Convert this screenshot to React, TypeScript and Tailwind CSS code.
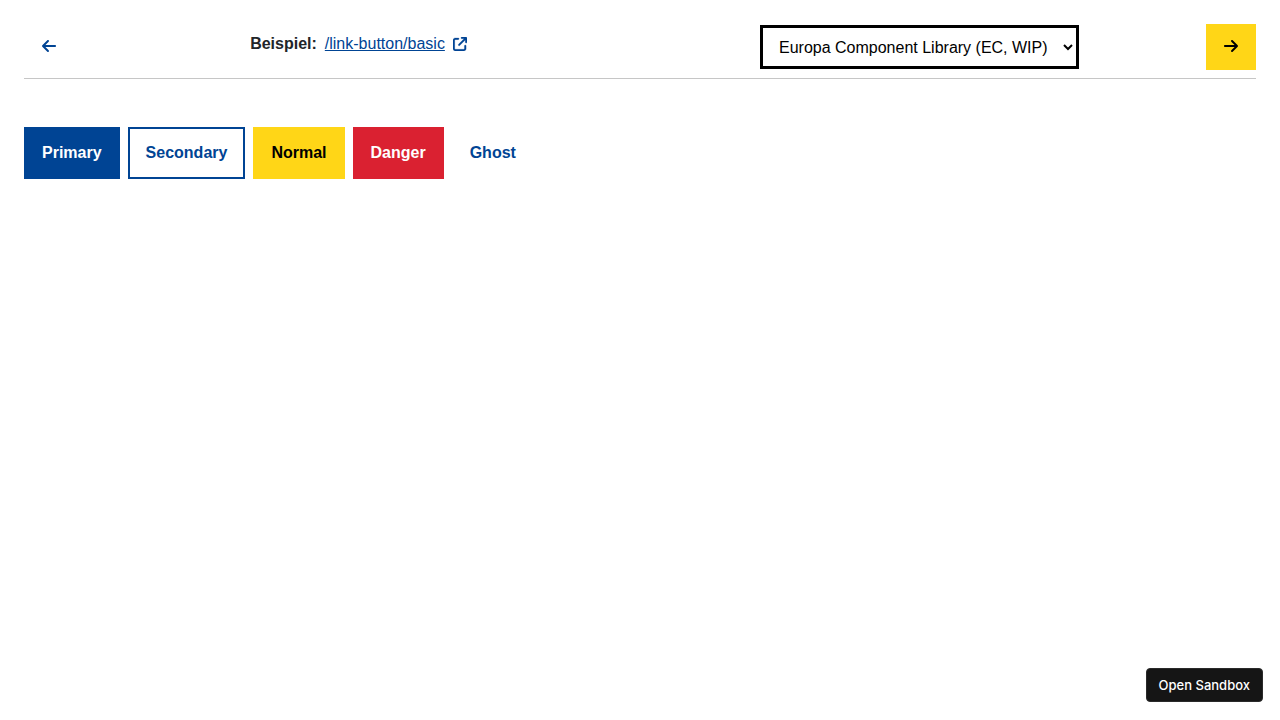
import { useState } from 'react';
import { FaArrowLeft, FaArrowRight, FaArrowUpRightFromSquare } from 'react-icons/fa6';

const buttons = [
  { label: 'Primary', style: 'border-[#004494] bg-[#004494] text-white' },
  { label: 'Secondary', style: 'border-[#004494] bg-white text-[#004494]' },
  { label: 'Normal', style: 'border-[#ffd617] bg-[#ffd617] text-black' },
  { label: 'Danger', style: 'border-[#da2131] bg-[#da2131] text-white' },
  { label: 'Ghost', style: 'border-transparent bg-transparent text-[#004494]' },
];

const themes = ['Europa Component Library (EC, WIP)'];

export default function App() {
  const [theme, setTheme] = useState(themes[0]);

  return (
    <div className="min-h-screen bg-white p-6 font-['Liberation_Sans',Arial,sans-serif] text-base text-[#212529]">
      <header className="flex items-start gap-1 border-b border-[#c6c6c6] pb-2">
        <a
          href="#previous"
          aria-label="Vorheriges Beispiel"
          className="flex h-11 w-[50px] items-center justify-center text-[#004494]"
        >
          <FaArrowLeft size={16} />
        </a>
        <div className="grid flex-1 grid-cols-2 items-start justify-items-center pr-0.5">
          <p className="flex items-center gap-2 pt-2">
            <strong>Beispiel:</strong>
            <a href="#link-button-basic" className="flex items-center gap-2 text-[#004494]">
              <span className="underline">/link-button/basic</span>
              <FaArrowUpRightFromSquare size={14} className="stroke-[#004494] stroke-[8]" />
            </a>
          </p>
          <select
            aria-label="Theme"
            value={theme}
            onChange={(event) => setTheme(event.target.value)}
            className="mt-px h-11 border-3 border-black bg-white px-3 text-black"
          >
            {themes.map((name) => (
              <option key={name}>{name}</option>
            ))}
          </select>
        </div>
        <a
          href="#next"
          aria-label="Nächstes Beispiel"
          className="flex h-[46px] w-[50px] items-center justify-center bg-[#ffd617] pb-0.5 text-black"
        >
          <FaArrowRight size={16} />
        </a>
      </header>

      <main className="flex flex-wrap gap-2 pt-12">
        {buttons.map(({ label, style }) => (
          <a
            key={label}
            href={`#${label.toLowerCase()}`}
            className={`flex h-[52px] items-center border-2 px-4 font-bold ${style}`}
          >
            {label}
          </a>
        ))}
      </main>

      <button
        type="button"
        className="fixed right-[17px] bottom-[18px] h-[34px] rounded border border-[#2a2a2a] bg-[#151515] px-3 pt-0.5 font-['Inter',sans-serif] text-[13px] font-medium text-white"
      >
        Open Sandbox
      </button>
    </div>
  );
}
